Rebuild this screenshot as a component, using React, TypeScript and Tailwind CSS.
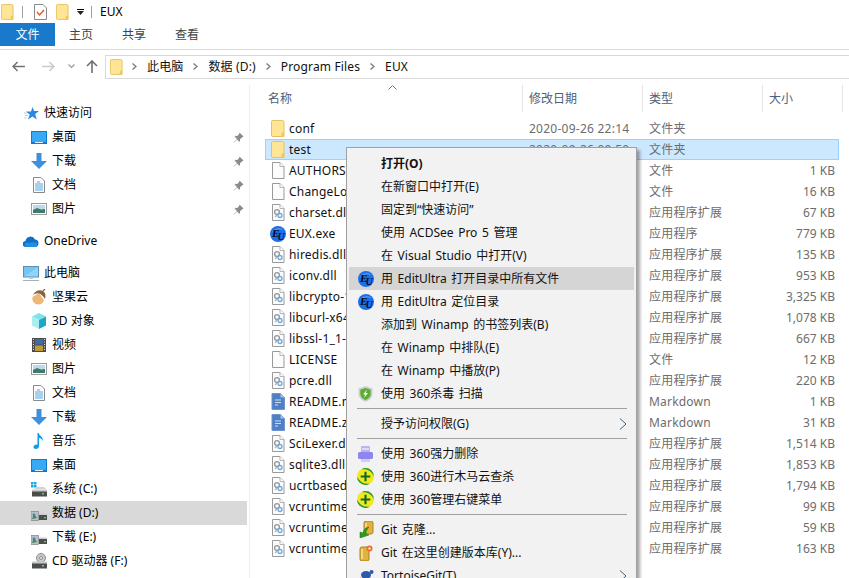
import type { ReactNode } from 'react'

const font = "font-['Noto_Sans','Noto_Sans_CJK_SC',sans-serif]"

function Folder({ className = 'w-[14px] h-[17px]' }: { className?: string }) {
  return (
    <svg viewBox="0 0 14 17" className={className}>
      <path d="M1.500.5h10a1.500 1.500 0 0 1 1.500 1.500v14.500H1.500a1 1 0 0 1-1-1V1.500a1 1 0 0 1 1-1z" fill="#ffe595" stroke="#e4c262" />
      <path d="M10.500 16.500v-4h2.500v4z" fill="#f3c84f" />
    </svg>
  )
}

function Page({ children }: { children?: ReactNode }) {
  return (
    <svg viewBox="0 0 14 17" className="w-[14px] h-[17px]">
      <path d="M1.500.5H9l4 4v12H1.500z" fill="#fcfcfc" stroke="#9a9a9a" />
      <path d="M9 .5v4h4" fill="#fff" stroke="#b5b5b5" />
      {children}
    </svg>
  )
}

function Dll() {
  return (
    <Page>
      <circle cx="6" cy="8" r="2.400" fill="none" stroke="#8f9aa5" strokeWidth="1.400" />
      <circle cx="9" cy="11.500" r="2" fill="none" stroke="#6fa8d8" strokeWidth="1.300" />
      <path d="M4 13l2-2" stroke="#a9b2ba" strokeWidth="1.200" />
    </Page>
  )
}

function Md() {
  return (
    <svg viewBox="0 0 14 17" className="w-[14px] h-[17px]">
      <path d="M1 .5h8.500L13.500 4.500V16.500H1z" fill="#4f7fc4" stroke="#6f94cc" />
      <path d="M9.500.5v4h4" fill="#a9c1e6" />
      <path d="M4 7h6M4 9.500h6M4 12h3" stroke="#cfdcf0" strokeWidth="1.200" />
    </svg>
  )
}

function Eu() {
  return (
    <svg viewBox="0 0 16 16" className="w-4 h-4">
      <circle cx="8" cy="8" r="8" fill="#1c6fe8" />
      <path d="M2 6a7 5 0 0 1 12-2a8 4 0 0 0-12 2z" fill="#6aa6f5" />
      <text x="2" y="10.500" fontSize="11" fontWeight="700" fontStyle="italic" fontFamily="Liberation Serif, serif" fill="#0a0a1e">E</text>
      <text x="7.500" y="14" fontSize="10" fontWeight="700" fontStyle="italic" fontFamily="Liberation Serif, serif" fill="#0a0a1e">U</text>
    </svg>
  )
}

function Desktop() {
  return (
    <svg viewBox="0 0 16 13" className="w-4 h-[13px]">
      <rect width="16" height="13" fill="#1279c9" />
      <path d="M1 1h14v10H1z" fill="#38aaf5" />
      <path d="M4 11.500h8" stroke="#dff1fd" />
    </svg>
  )
}

function Down() {
  return (
    <svg viewBox="0 0 16 16" className="w-4 h-4">
      <path d="M5.500 0h5v8H16l-8 8-8-8h5.500z" fill="#3f8fdf" />
    </svg>
  )
}

function Doc() {
  return (
    <svg viewBox="0 0 12 16" className="w-3 h-4">
      <path d="M.5.5H8L11.500 4v11.500H.5z" fill="#fff" stroke="#8a8a8a" />
      <path d="M4 5h3M2 7h8M2 9h8M2 11h8M2 13h8" stroke="#3b9bd8" strokeWidth=".9" />
    </svg>
  )
}

function Picture() {
  return (
    <svg viewBox="0 0 16 12" className="w-4 h-3">
      <rect x=".5" y=".5" width="15" height="11" fill="#fff" stroke="#9c9c9c" />
      <rect x="2" y="2" width="12" height="8" fill="#bcd9ee" />
      <path d="M2 7l4-2 4 1.500 4-.5v4H2z" fill="#3f7a68" />
    </svg>
  )
}

function Pin() {
  return (
    <svg viewBox="0 0 11 11" className="w-[11px] h-[11px]">
      <path d="M6.500.5l4 4-1.200.7-2.300 2 .1 1.800-.9.8-2.200-2.200L.8 10.500l-.3-.3 3.500-3.300-2.200-2.200.8-.9 1.800.1 2-2.300z" fill="#858c94" />
    </svg>
  )
}

function Star() {
  return (
    <svg viewBox="0 0 15 13" className="w-[15px] h-[13px]">
      <path d="M8.500 0l1.600 4H15l-3.800 3 1.500 5.500-4.200-3-4.500 3 1.700-5L2 4.500h5z" fill="#2a8ae0" />
      <path d="M0 6h3M1 8.500h3M0 11h2.500" stroke="#a9d3f5" />
    </svg>
  )
}

function Cloud() {
  return (
    <svg viewBox="0 0 16 11" className="w-4 h-[11px]">
      <path d="M3 11a3 3 0 0 1-.5-6A5 5 0 0 1 12 3.500 3.800 3.800 0 0 1 12.500 11z" fill="#0f6fc6" />
      <path d="M3 11a2.500 2.500 0 0 1 0-4.500h10a2.400 2.400 0 0 1 0 4.500z" fill="#1f8fe0" />
    </svg>
  )
}

function Monitor() {
  return (
    <svg viewBox="0 0 16 15" className="w-4 h-[15px]">
      <rect x=".5" y=".5" width="15" height="10.500" fill="#8fd4fa" stroke="#5d8fae" />
      <path d="M1 10.500V1h14z" fill="#5ab6ee" opacity=".5" />
      <path d="M6 11h4v2H6z" fill="#bdc8d2" />
      <path d="M0 14.500h16" stroke="#a4b2bf" />
    </svg>
  )
}

function Acorn() {
  return (
    <svg viewBox="0 0 16 16" className="w-4 h-4">
      <path d="M1.500 8c-1 4 2 7.500 6 7.500 2 0 4-1 5.500-4L8 4z" fill="#edb877" />
      <path d="M2 6c2-4.500 7-6 10-4 2.500 1.500 3 5 2 8-1-2-4-5-6-5.500-2-.5-4 .5-6 1.500z" fill="#8c6438" />
      <path d="M12 2l2-2" stroke="#8c6438" strokeWidth="1.300" />
    </svg>
  )
}

function Cube() {
  return (
    <svg viewBox="0 0 16 16" className="w-4 h-4">
      <path d="M8 0l7 3.500-7 3.500-7-3.500z" fill="#7fe3ea" />
      <path d="M1 3.500L8 7v9l-7-3.500z" fill="#a8eef2" />
      <path d="M15 3.500L8 7v9l7-3.500z" fill="#1ca8c4" />
    </svg>
  )
}

function Film() {
  return (
    <svg viewBox="0 0 14 14" className="w-[14px] h-[14px]">
      <rect width="14" height="14" fill="#4c4c4c" />
      <rect x="3" y="1" width="8" height="5.500" fill="#3e6ca8" />
      <rect x="3" y="7.500" width="8" height="5.500" fill="#c09a3a" />
      <path d="M1 1.500h1M1 4h1M1 6.500h1M1 9h1M1 11.500h1M12 1.500h1M12 4h1M12 6.500h1M12 9h1M12 11.500h1" stroke="#ddd" />
    </svg>
  )
}

function Note() {
  return (
    <svg viewBox="0 0 12 16" className="w-3 h-4">
      <path d="M4.500 0h1.300c.3 3 5 3.500 4 8.500-.3-2-2-3.500-3.800-3.500v8c0 1.700-1.500 3-3.200 3C1.400 16 .5 15.200.5 14c0-1.600 2-2.800 4-2.300z" fill="#0f9be8" />
    </svg>
  )
}

function Drive({ kind }: { kind: 'sys' | 'data' | 'cd' }) {
  return (
    <svg viewBox="0 0 16 16" className="w-4 h-4">
      {kind === 'cd' && <circle cx="10" cy="5" r="4.500" fill="#c8c8c8" stroke="#8e8e8e" />}
      {kind === 'cd' && <circle cx="10" cy="5" r="1.500" fill="#f0f0f0" stroke="#8e8e8e" />}
      {kind === 'sys' && <path d="M0 1h2.500v2.500H0zM3 1h2.500v2.500H3zM0 4h2.500v2.500H0zM3 4h2.500v2.500H3z" fill="#14a7ea" />}
      {kind === 'sys' && <path d="M3 8L5 6h8l2 2z" fill="#d3d3d3" />}
      {kind === 'sys' || kind === 'cd' ? (
        <>
          <rect x="1" y="10" width="15" height="5.500" fill="#4d4d4d" />
          <path d="M1 8.500h15v2H1z" fill="#c9c9c9" />
          <rect x="11" y="12" width="2" height="1.500" fill="#3fe05a" />
        </>
      ) : (
        <>
          <rect x="0" y="6.500" width="7.500" height="9" fill="#b9bfc2" stroke="#7f8487" strokeWidth=".7" />
          <path d="M1 14l2-5 3 4z" fill="#3f8a55" />
          <circle cx="3" cy="10" r="1.400" fill="#3f7ec0" />
          <rect x="8" y="10" width="8" height="5" fill="#4d4d4d" />
          <path d="M8 8.500h8v1.500H8z" fill="#cfcfcf" />
          <rect x="13" y="12" width="2" height="1.300" fill="#3fe05a" />
        </>
      )}
    </svg>
  )
}

function Shield() {
  return (
    <svg viewBox="0 0 15 16" className="w-[15px] h-4">
      <path d="M7.500 0l7 2.500v5c0 4-3 7-7 8.500-4-1.500-7-4.500-7-8.500v-5z" fill="#c9ced0" />
      <path d="M7.500 2l5.200 1.700v4c0 3-2.200 5.200-5.200 6.400-3-1.200-5.200-3.400-5.200-6.400v-4z" fill="#5cae2e" />
      <path d="M9 3.500L5 8.500h2.300L6 12l4-5H7.700z" fill="#fff" />
    </svg>
  )
}

function PurpleBox() {
  return (
    <svg viewBox="0 0 15 16" className="w-[15px] h-4">
      <rect x="3" y="0" width="9" height="7" rx="1" fill="#b9b4f3" />
      <rect x="0" y="6" width="15" height="7" rx="1.500" fill="#8e86ee" />
      <rect x="3" y="13" width="9" height="3" fill="#cfcbf8" />
      <path d="M4 3h7" stroke="#fff" />
    </svg>
  )
}

function Plus360() {
  return (
    <svg viewBox="0 0 16 16" className="w-[17px] h-[17px]">
      <circle cx="8" cy="8" r="8" fill="#f3e81d" />
      <path d="M0 8a8 8 0 0 0 8 8c1 0 3-.5 4-1.500-5 1-9-1-12-6.500z" fill="#1f9b3d" />
      <path d="M16 8a8 8 0 0 0-8-8c-1 0-2.500.4-3.500 1.200 5-.7 9 1.500 11.500 6.800z" fill="#1f9b3d" />
      <path d="M7 3.500h2V7h3.500v2H9v3.500H7V9H3.500V7H7z" fill="#0d6a22" />
    </svg>
  )
}

function GitClone() {
  return (
    <svg viewBox="0 0 16 17" className="w-4 h-[17px]">
      <rect x="6" y="0" width="9" height="13" rx="2" fill="#e3b23c" stroke="#a98322" />
      <path d="M8 2v9" stroke="#f7e3a0" strokeWidth="1.500" />
      <path d="M2 11l3 1c1-4 3-6 6-6-2 2-3 4-3 7l3 1-9 3z" fill="#2f9a1e" stroke="#1c6d10" strokeWidth=".5" />
    </svg>
  )
}

function GitNew() {
  return (
    <svg viewBox="0 0 14 16" className="w-[14px] h-4">
      <rect x="1" y="2" width="9" height="14" rx="2" fill="#e3b23c" stroke="#a98322" />
      <path d="M3 4v10" stroke="#f7e3a0" strokeWidth="1.500" />
      <circle cx="10.500" cy="3.500" r="3" fill="#f2683a" />
      <circle cx="10.500" cy="3.500" r="1.200" fill="#ffe3a0" />
    </svg>
  )
}

function Turtle() {
  return (
    <svg viewBox="0 0 16 16" className="w-4 h-4">
      <ellipse cx="8" cy="7" rx="5" ry="4" fill="#2c5aa8" />
      <circle cx="13.500" cy="4" r="2" fill="#2c5aa8" />
      <path d="M3 10L0 14M12 10l3 4M6 11l-1 4M10 11l1 4" stroke="#b02020" strokeWidth="1.500" />
    </svg>
  )
}

function Chevron() {
  return (
    <svg viewBox="0 0 8 12" className="w-2 h-3">
      <path d="M1 .5l6 5.500-6 5.500" fill="none" stroke="#44617f" />
    </svg>
  )
}

function Crumb({ children }: { children: ReactNode }) {
  return (
    <>
      <svg viewBox="0 0 5 7" className="w-[5px] h-[7px] mx-[10px]">
        <path d="M.5.5L4 3.500.5 6.500" fill="none" stroke="#7b7b7b" strokeWidth="1.300" />
      </svg>
      <span className="tracking-[0.15px]">{children}</span>
    </>
  )
}

const quick = [
  { icon: <Desktop />, label: '桌面' },
  { icon: <Down />, label: '下载' },
  { icon: <Doc />, label: '文档' },
  { icon: <Picture />, label: '图片' },
]

const pc = [
  { icon: <Acorn />, label: '坚果云' },
  { icon: <Cube />, label: '3D 对象' },
  { icon: <Film />, label: '视频' },
  { icon: <Picture />, label: '图片' },
  { icon: <Doc />, label: '文档' },
  { icon: <Down />, label: '下载' },
  { icon: <Note />, label: '音乐' },
  { icon: <Desktop />, label: '桌面' },
  { icon: <Drive kind="sys" />, label: '系统 (C:)' },
  { icon: <Drive kind="data" />, label: '数据 (D:)', active: true },
  { icon: <Drive kind="data" />, label: '下载 (E:)' },
  { icon: <Drive kind="cd" />, label: 'CD 驱动器 (F:)' },
]

function NavRow({ icon, label, level = 1, pin, active }: { icon: ReactNode; label: string; level?: number; pin?: boolean; active?: boolean }) {
  return (
    <div className={`flex items-center h-6 w-[247px] ${active ? 'bg-[#d9d9d9]' : ''} ${level === 0 ? 'pl-[23px]' : 'pl-[31px]'}`}>
      <span className="w-4 flex justify-center shrink-0">{icon}</span>
      <span className="ml-[5px] text-black grow">{label}</span>
      {pin && <span className="mr-[3px] flex"><Pin /></span>}
    </div>
  )
}

const dll = '应用程序扩展'
const files = [
  { icon: <Folder />, name: 'conf', date: '2020-09-26 22:14', type: '文件夹', size: '' },
  { icon: <Folder />, name: 'test', date: '2020-09-26 09:50', type: '文件夹', size: '', selected: true },
  { icon: <Page />, name: 'AUTHORS', date: '', type: '文件', size: '1 KB' },
  { icon: <Page />, name: 'ChangeLog', date: '', type: '文件', size: '16 KB' },
  { icon: <Dll />, name: 'charset.dll', date: '', type: dll, size: '67 KB' },
  { icon: <Eu />, name: 'EUX.exe', date: '', type: '应用程序', size: '779 KB' },
  { icon: <Dll />, name: 'hiredis.dll', date: '', type: dll, size: '135 KB' },
  { icon: <Dll />, name: 'iconv.dll', date: '', type: dll, size: '953 KB' },
  { icon: <Dll />, name: 'libcrypto-1_1-x64.dll', date: '', type: dll, size: '3,325 KB' },
  { icon: <Dll />, name: 'libcurl-x64.dll', date: '', type: dll, size: '1,078 KB' },
  { icon: <Dll />, name: 'libssl-1_1-x64.dll', date: '', type: dll, size: '667 KB' },
  { icon: <Page />, name: 'LICENSE', date: '', type: '文件', size: '12 KB' },
  { icon: <Dll />, name: 'pcre.dll', date: '', type: dll, size: '220 KB' },
  { icon: <Md />, name: 'README.md', date: '', type: 'Markdown', size: '1 KB' },
  { icon: <Md />, name: 'README.zh.md', date: '', type: 'Markdown', size: '31 KB' },
  { icon: <Dll />, name: 'SciLexer.dll', date: '', type: dll, size: '1,514 KB' },
  { icon: <Dll />, name: 'sqlite3.dll', date: '', type: dll, size: '1,853 KB' },
  { icon: <Dll />, name: 'ucrtbased.dll', date: '', type: dll, size: '1,794 KB' },
  { icon: <Dll />, name: 'vcruntime140.dll', date: '', type: dll, size: '99 KB' },
  { icon: <Dll />, name: 'vcruntime140_1.dll', date: '', type: dll, size: '59 KB' },
  { icon: <Dll />, name: 'vcruntime140d.dll', date: '', type: dll, size: '163 KB' },
]

function MenuItem({ icon, children, bold, hover, arrow }: { icon?: ReactNode; children: ReactNode; bold?: boolean; hover?: boolean; arrow?: boolean }) {
  return (
    <div className={`flex items-center h-[23px] shrink-0 ${hover ? 'bg-[#d5d5d5]' : ''}`}>
      <span className="w-[32px] flex justify-center shrink-0 pl-[1px]">{icon}</span>
      <span className={`grow text-[#111] [word-spacing:1.5px] ${bold ? 'font-bold' : ''}`}>{children}</span>
      {arrow && <span className="mr-[7px] flex"><Chevron /></span>}
    </div>
  )
}

function MenuLine() {
  return <div className="h-px bg-[#a0a0a0] ml-[8px] mr-[7px] my-[3px] shrink-0" />
}

function HeaderCell({ className, children }: { className: string; children: ReactNode }) {
  return <div className={`flex items-center h-full border-r border-[#e5e5e5] text-[#4c607a] ${className}`}>{children}</div>
}

export default function App() {
  return (
    <div className={`relative w-[849px] h-[578px] overflow-hidden bg-white flex flex-col text-[12px] leading-[16px] ${font}`}>
      {/* title bar */}
      <div className="flex items-center h-[23px] shrink-0 pl-px">
        <Folder className="w-[13px] h-4" />
        <span className="w-px h-[12px] bg-[#a0a0a0] ml-[8px]" />
        <span className="ml-[11px] flex">
          <svg viewBox="0 0 13 16" className="w-[13px] h-4">
            <path d="M.5.5H9L12.500 4v11.500H.5z" fill="#fff" stroke="#8a8a8a" />
            <path d="M3 8l2.500 3L10 6" fill="none" stroke="#e2562a" strokeWidth="1.400" />
          </svg>
        </span>
        <span className="ml-[9px] flex"><Folder className="w-[13px] h-4" /></span>
        <span className="ml-[8px] flex flex-col items-center gap-[1px]">
          <span className="w-[7px] h-px bg-black" />
          <svg viewBox="0 0 7 4" className="w-[7px] h-1"><path d="M0 0h7L3.500 4z" fill="#222" /></svg>
        </span>
        <span className="w-px h-[12px] bg-[#a0a0a0] ml-[7px]" />
        <span className="ml-[8px] text-black">EUX</span>
      </div>
      {/* ribbon tabs */}
      <div className="flex h-[27px] shrink-0 border-b border-[#dadada] items-start">
        <div className="w-[55px] h-[23px] bg-[#1979ca] text-white flex items-center justify-center">文件</div>
        <div className="ml-[14px] w-[24px] h-[23px] flex items-center text-[#444]">主页</div>
        <div className="ml-[29px] w-[24px] h-[23px] flex items-center text-[#444]">共享</div>
        <div className="ml-[29px] w-[24px] h-[23px] flex items-center text-[#444]">查看</div>
      </div>
      {/* address row */}
      <div className="flex items-center h-[35px] shrink-0 pb-[2px]">
        <span className="ml-[12px] flex">
          <svg viewBox="0 0 14 12" className="w-[13px] h-[11px]"><path d="M6 1L1 6l5 5M1 6h13" fill="none" stroke="#707070" strokeWidth="1.600" /></svg>
        </span>
        <span className="ml-[17px] flex">
          <svg viewBox="0 0 14 12" className="w-[13px] h-[11px]"><path d="M8 1l5 5-5 5M13 6H0" fill="none" stroke="#c9c9c9" strokeWidth="1.600" /></svg>
        </span>
        <span className="ml-[13px] flex">
          <svg viewBox="0 0 7 5" className="w-[7px] h-[5px]"><path d="M.5.5l3 3 3-3" fill="none" stroke="#9a9a9a" strokeWidth="1.200" /></svg>
        </span>
        <span className="ml-[11px] flex">
          <svg viewBox="0 0 12 13" className="w-3 h-[13px]"><path d="M1 6l5-5 5 5M6 1v12" fill="none" stroke="#707070" strokeWidth="1.600" /></svg>
        </span>
        <div className="ml-[7px] grow h-[24px] border border-[#d9d9d9] border-r-0 flex items-center pl-[4px] text-[#111]">
          <span className="flex -mr-px"><Folder className="w-[13px] h-4" /></span>
          <Crumb>此电脑</Crumb>
          <Crumb>数据 (D:)</Crumb>
          <Crumb>Program Files</Crumb>
          <Crumb>EUX</Crumb>
        </div>
      </div>
      {/* body */}
      <div className="flex grow min-h-0">
        <div className="w-[249px] shrink-0 border-r border-[#eeeeee] pt-[16px] box-content">
          <NavRow level={0} icon={<Star />} label="快速访问" />
          {quick.map((q) => <NavRow key={q.label} icon={q.icon} label={q.label} pin />)}
          <div className="h-[8px]" />
          <NavRow level={0} icon={<Cloud />} label="OneDrive" />
          <div className="h-[8px]" />
          <NavRow level={0} icon={<Monitor />} label="此电脑" />
          {pc.map((p) => <NavRow key={p.label + p.active} icon={p.icon} label={p.label} active={p.active} />)}
        </div>
        <div className="grow min-w-0">
          <div className="relative flex h-[27px] text-[#4c607a] pl-[15px]">
            <HeaderCell className="w-[258px] pl-[3px]">名称</HeaderCell>
            <HeaderCell className="w-[120px] pl-[6px]">修改日期</HeaderCell>
            <HeaderCell className="w-[120px] pl-[6px]">类型</HeaderCell>
            <HeaderCell className="w-[80px] pl-[6px]">大小</HeaderCell>
            <svg viewBox="0 0 9 5" className="absolute left-[138px] top-0 w-[9px] h-[5px]"><path d="M.5 4.500l4-4 4 4" fill="none" stroke="#7a7a7a" /></svg>
          </div>
          <div className="pt-[6px] pl-[15px]">
            {files.map((f) => (
              <div key={f.name} className={`flex items-center h-[21px] w-[574px] border ${f.selected ? 'bg-[#cce8ff] border-[#99d1ff]' : 'border-transparent'}`}>
                <span className="w-[18px] ml-[3px] flex justify-center shrink-0">{f.icon}</span>
                <span className="ml-[2px] w-[240px] shrink-0 text-[#111] whitespace-nowrap tracking-[0.2px]">{f.name}</span>
                <span className="w-[120px] shrink-0 text-[#6d6d6d] whitespace-nowrap tracking-[0.25px]">{f.date}</span>
                <span className="w-[110px] shrink-0 text-[#6d6d6d] tracking-[0.2px]">{f.type}</span>
                <span className="grow text-right pr-[3px] text-[#6d6d6d] whitespace-nowrap">{f.size}</span>
              </div>
            ))}
          </div>
        </div>
      </div>
      {/* context menu */}
      <div className="absolute left-[346px] top-[147px] w-[291px] h-[440px] bg-[#f2f2f2] border border-[#a0a0a0] shadow-[3px_3px_3px_rgba(0,0,0,0.35)] px-[2px] pt-[4px] flex flex-col">
        <MenuItem bold>打开(O)</MenuItem>
        <MenuItem>在新窗口中打开(E)</MenuItem>
        <MenuItem>固定到“快速访问”</MenuItem>
        <MenuItem>使用 ACDSee Pro 5 管理</MenuItem>
        <MenuItem>在 Visual Studio 中打开(V)</MenuItem>
        <MenuItem hover icon={<Eu />}>用 EditUltra 打开目录中所有文件</MenuItem>
        <MenuItem icon={<Eu />}>用 EditUltra 定位目录</MenuItem>
        <MenuItem>添加到 Winamp 的书签列表(B)</MenuItem>
        <MenuItem>在 Winamp 中排队(E)</MenuItem>
        <MenuItem>在 Winamp 中播放(P)</MenuItem>
        <MenuItem icon={<Shield />}>使用 360杀毒 扫描</MenuItem>
        <MenuLine />
        <MenuItem arrow>授予访问权限(G)</MenuItem>
        <MenuLine />
        <MenuItem icon={<PurpleBox />}>使用 360强力删除</MenuItem>
        <MenuItem icon={<Plus360 />}>使用 360进行木马云查杀</MenuItem>
        <MenuItem icon={<Plus360 />}>使用 360管理右键菜单</MenuItem>
        <MenuLine />
        <MenuItem icon={<GitClone />}>Git 克隆...</MenuItem>
        <MenuItem icon={<GitNew />}>Git 在这里创建版本库(Y)...</MenuItem>
        <MenuItem arrow icon={<Turtle />}>TortoiseGit(T)</MenuItem>
      </div>
    </div>
  )
}
